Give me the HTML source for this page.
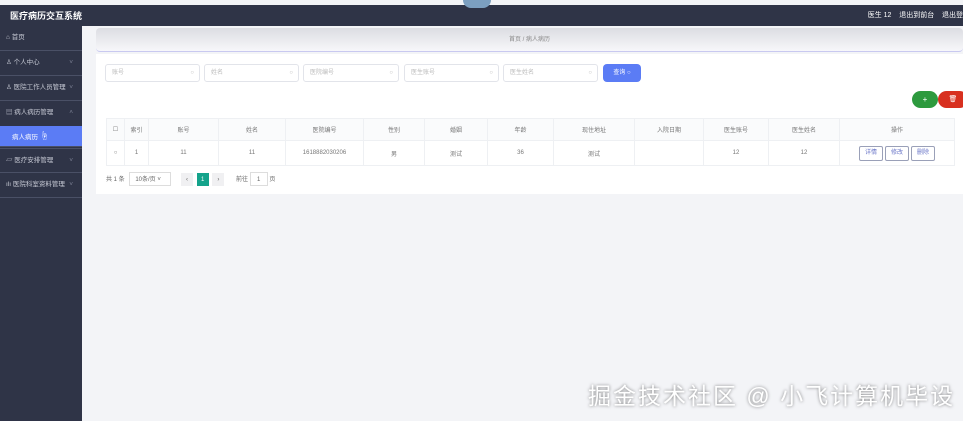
<!DOCTYPE html><html><head><meta charset="utf-8"><style>
*{margin:0;padding:0;box-sizing:border-box}
body{width:963px;height:421px;overflow:hidden;background:#f3f4f7;font-family:"Liberation Sans","Noto Sans CJK SC",sans-serif;font-size:7px;color:#666;position:relative}
.top{position:absolute;top:5px;left:0;width:963px;height:21px;background:#2f3447;color:#fff}
.side{position:absolute;top:26px;left:0;width:82px;height:395px;background:#2f3447}
.si{height:25px;border-bottom:1px solid #4a5066;color:#c8cbd6;font-size:6.5px;line-height:24px;padding-left:6px;position:relative}
.si .ar{position:absolute;right:9px;color:#7b8094}
.act{background:#5b7cf5;color:#fff;padding-left:12px;height:21px;line-height:21px}
.crumb{position:absolute;left:96px;top:28px;width:867px;height:24px;background:linear-gradient(#dcdde2,#f7f7fa);border-bottom:1px solid #c9c9f0;border-radius:4px;text-align:center;line-height:24px;font-size:6px;color:#888}
.content{position:absolute;left:96px;top:54px;width:867px;height:140px;background:#fff}
.inp{position:absolute;top:10px;height:18px;border:1px solid #e2e4ea;border-radius:3px;font-size:6px;color:#bbb;line-height:16px;padding-left:6px}
.inp:after{content:"○";position:absolute;right:5px;color:#bbb}
table{position:absolute;left:10px;top:64px;width:849px;border-collapse:collapse;font-size:6px}
td{border:1px solid #eef0f3;text-align:center;color:#777}
tr.h td{height:22px;background:#fafbfc}
tr.d td{height:25px}
.btn{display:inline-block;border:1px solid #9aa0b8;border-radius:2px;padding:0 5px;height:15px;line-height:13px;color:#6a76c8;margin:0 1px}
</style></head><body>
<div class="top"><span style="position:absolute;left:10px;top:4px;font-size:9px;font-weight:bold">医疗病历交互系统</span>
<span style="position:absolute;right:0;top:5px;font-size:7px">医生 12 &nbsp;&nbsp; 退出到前台 &nbsp;&nbsp; 退出登</span></div>
<div style="position:absolute;left:463px;top:0;width:28px;height:8px;border-radius:0 0 14px 14px;background:#7c9fc0"></div>
<div class="side">
<div class="si">⌂ 首页</div>
<div class="si">♙ 个人中心<span class="ar">˅</span></div>
<div class="si">♙ 医院工作人员管理<span class="ar">˅</span></div>
<div class="si" style="border:none">▤ 病人病历管理<span class="ar">˄</span></div>
<div class="si act">病人病历 <span style="color:#fff;font-size:9px">☝</span></div>
<div class="si" style="border-top:1px solid #4a5066;margin-top:1px">▱ 医疗安排管理<span class="ar">˅</span></div>
<div class="si">ılı 医院科室资料管理<span class="ar">˅</span></div>
</div>
<div class="crumb">首页 / 病人病历</div>
<div class="content">
<div class="inp" style="left:9px;width:95px">账号</div>
<div class="inp" style="left:108px;width:95px">姓名</div>
<div class="inp" style="left:207px;width:96px">医院编号</div>
<div class="inp" style="left:308px;width:95px">医生账号</div>
<div class="inp" style="left:407px;width:95px">医生姓名</div>
<div style="position:absolute;left:507px;top:10px;width:38px;height:18px;background:#5b7cf5;border-radius:4px;color:#fff;font-size:6px;text-align:center;line-height:18px">查询 ○</div>
<div style="position:absolute;left:816px;top:37px;width:26px;height:17px;background:#2d9a3e;border-radius:9px;color:#fff;text-align:center;line-height:17px;font-size:8px">+</div>
<div style="position:absolute;left:842px;top:37px;width:30px;height:17px;background:#d8301f;border-radius:9px;color:#fff;text-align:center;line-height:17px;font-size:7px">🗑</div>
<table>
<tr class="h"><td style="width:18px">☐</td><td style="width:24px">索引</td><td style="width:70px">账号</td><td style="width:67px">姓名</td><td style="width:78px">医院编号</td><td style="width:61px">性别</td><td style="width:63px">婚姻</td><td style="width:66px">年龄</td><td style="width:81px">现住地址</td><td style="width:69px">入院日期</td><td style="width:65px">医生账号</td><td style="width:71px">医生姓名</td><td>操作</td></tr>
<tr class="d"><td>○</td><td>1</td><td>11</td><td>11</td><td>1618882030206</td><td>男</td><td>测试</td><td>36</td><td>测试</td><td></td><td>12</td><td>12</td><td><span class="btn">详情</span><span class="btn">修改</span><span class="btn">删除</span></td></tr>
</table>
<div style="position:absolute;left:10px;top:118px;font-size:6px;line-height:14px">共 1 条 <span style="display:inline-block;border:1px solid #ddd;width:42px;height:14px;margin-left:3px;padding-left:5px">10条/页 ˅</span>
<span style="display:inline-block;width:12px;height:13px;background:#f0f0f2;margin-left:8px;text-align:center">‹</span>
<span style="display:inline-block;width:12px;height:13px;background:#14a38b;color:#fff;margin-left:2px;text-align:center">1</span>
<span style="display:inline-block;width:12px;height:13px;background:#f0f0f2;margin-left:2px;text-align:center">›</span>
<span style="margin-left:10px">前往</span> <span style="display:inline-block;border:1px solid #ddd;width:18px;height:14px;text-align:center">1</span> 页</div>
</div>
<div style="position:absolute;left:588px;top:377px;font-size:23px;color:#fff;text-shadow:0 0 3px rgba(0,0,0,.5);letter-spacing:2px;white-space:nowrap">掘金技术社区 @ 小飞计算机毕设</div>
</body></html>
